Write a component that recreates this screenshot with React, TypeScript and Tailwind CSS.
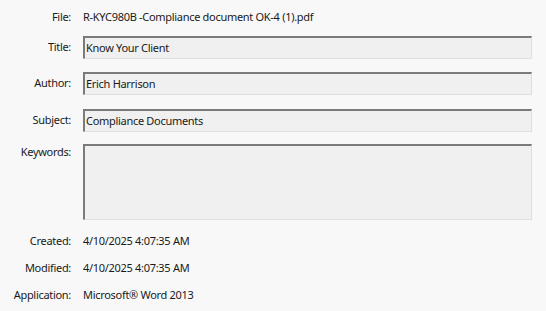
import React from 'react';

const font = { fontFamily: '"Noto Sans", "Liberation Sans", sans-serif' };

type TFieldProps = {
  label: string;
  value?: string;
  tall?: boolean;
};

const Label = ({ children }: { children: React.ReactNode }) => (
  <div className="w-[71px] shrink-0 text-right">{children}</div>
);

const Field = ({ label, value, tall }: TFieldProps) => (
  <div className={`flex gap-[12px] ${tall ? 'items-start' : 'items-center'}`}>
    <Label>
      <span className={tall ? 'block leading-[16px]' : ''}>{label}</span>
    </Label>
    <div
      className={`w-[449px] border-t-2 border-l-2 border-r border-b border-t-[#7b7b7b] border-l-[#7b7b7b] border-r-[#dedede] border-b-[#dedede] bg-[#f0f0f0] pl-[1px] leading-[20px] ${
        tall ? 'h-[76px]' : 'h-[23px]'
      }`}
    >
      {value}
    </div>
  </div>
);

const Info = ({ label, value }: { label: string; value: string }) => (
  <div className="flex h-[24px] items-center gap-[12px]">
    <Label>{label}</Label>
    <div>{value}</div>
  </div>
);

export default function App() {
  return (
    <div
      className="h-[311px] w-[546px] bg-[#f8f8f8] pt-[5px] text-[11px] tracking-[-0.3px] text-[#1a1a1a]"
      style={font}
    >
      <Info label="File:" value="R-KYC980B -Compliance document OK-4 (1).pdf" />
      <div className="mt-[7px]">
        <Field label="Title:" value="Know Your Client" />
      </div>
      <div className="mt-[13px]">
        <Field label="Author:" value="Erich Harrison" />
      </div>
      <div className="mt-[14px]">
        <Field label="Subject:" value="Compliance Documents" />
      </div>
      <div className="mt-[12px]">
        <Field label="Keywords:" tall />
      </div>
      <div className="mt-[9px]">
        <Info label="Created:" value="4/10/2025 4:07:35 AM" />
      </div>
      <div className="mt-[3px]">
        <Info label="Modified:" value="4/10/2025 4:07:35 AM" />
      </div>
      <div className="mt-[3px]">
        <Info label="Application:" value="Microsoft® Word 2013" />
      </div>
    </div>
  );
}
